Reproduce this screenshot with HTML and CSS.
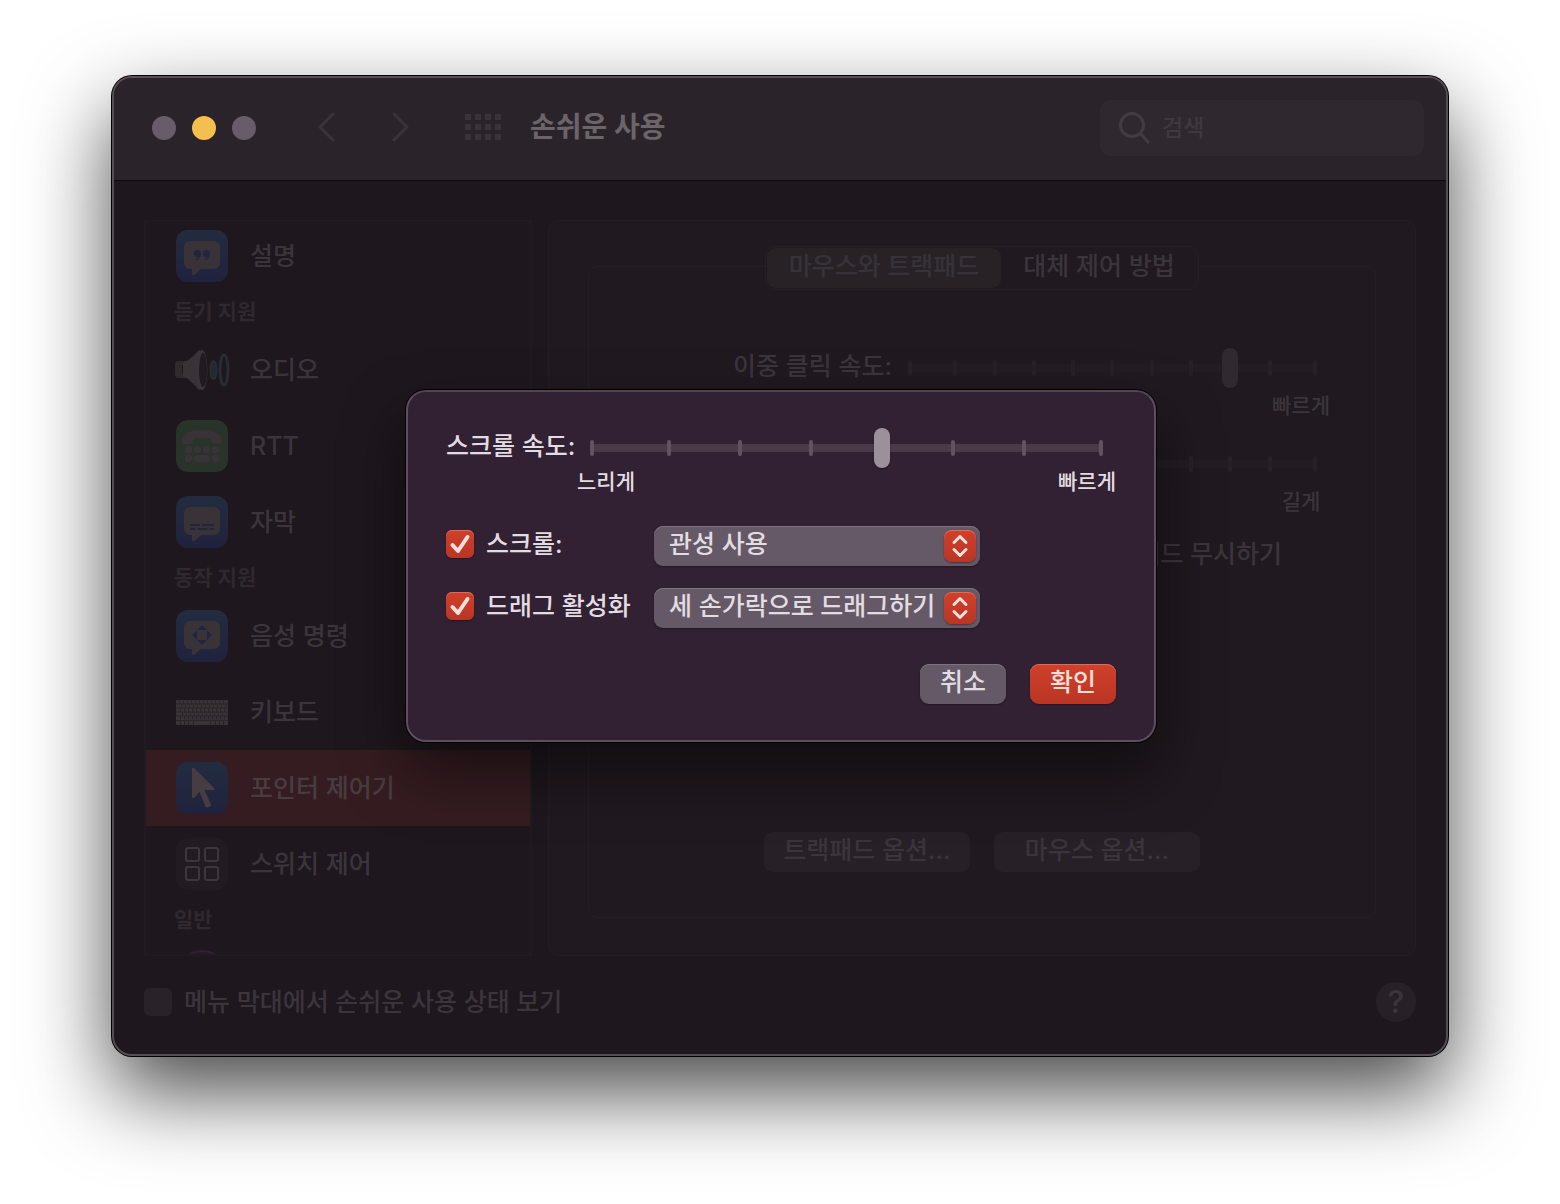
FILE: index.html
```html
<!DOCTYPE html>
<html lang="ko">
<head>
  <meta charset="UTF-8" />
  <title>손쉬운 사용</title>
  <meta name="viewport" content="width=device-width, initial-scale=1.0" />
  <link rel="stylesheet" href="styles.css">
</head>
<body>
  <div class="window">
    <header class="titlebar">
      <div class="lights">
        <span class="light"></span>
        <span class="light minimize"></span>
        <span class="light"></span>
      </div>
      <div class="nav">
        <button type="button" class="nav-btn" aria-label="뒤로">
          <svg width="20" height="30" viewBox="0 0 20 30"><path d="M17 2 L4 15 L17 28" /></svg>
        </button>
        <button type="button" class="nav-btn" aria-label="앞으로">
          <svg width="20" height="30" viewBox="0 0 20 30"><path d="M3 2 L16 15 L3 28" /></svg>
        </button>
      </div>
      <button type="button" class="nav-btn show-all" aria-label="모두 보기">
        <svg width="36" height="26" viewBox="0 0 36 26">
          <path class="dots" d="M0 0h6v6H0zM10 0h6v6h-6zM20 0h6v6h-6zM30 0h6v6h-6zM0 10h6v6H0zM10 10h6v6h-6zM20 10h6v6h-6zM30 10h6v6h-6zM0 20h6v6H0zM10 20h6v6h-6zM20 20h6v6h-6zM30 20h6v6h-6z" />
        </svg>
      </button>
      <h1>손쉬운 사용</h1>
      <label class="search">
        <svg width="32" height="32" viewBox="0 0 32 32"><circle cx="14" cy="13" r="11.500" /><path d="M22.500 21.500 L30 30" /></svg>
        <input type="text" placeholder="검색" aria-label="검색" />
      </label>
    </header>

    <main class="panes">
      <nav class="sidebar">
        <ul>
          <li class="item">
            <svg class="icon" viewBox="0 0 52 52">
              <defs>
                <linearGradient id="blue" x1="0" y1="0" x2="0" y2="1"><stop offset="0" stop-color="#222c40" /><stop offset="1" stop-color="#20223d" /></linearGradient>
              </defs>
              <rect width="52" height="52" rx="12" fill="url(#blue)" />
              <path class="glyph" d="M14 11h24a6 6 0 0 1 6 6v16a6 6 0 0 1-6 6H25l-6 5.500q-3 2-3-1V39h-2a6 6 0 0 1-6-6V17a6 6 0 0 1 6-6z" />
              <path fill="#212640" d="M21.500 20a3.500 3.500 0 0 1 3.500 3.500q0 5-5 6.800v-1.300q2-.8 2.400-2.200a3.500 3.500 0 1 1-.9-6.800zM30.500 20a3.500 3.500 0 0 1 3.500 3.500q0 5-5 6.800v-1.300q2-.8 2.400-2.200a3.500 3.500 0 1 1-.9-6.800z" />
            </svg>
            <a href="#">설명</a>
          </li>
          <li class="section">듣기 지원</li>
          <li class="item">
            <svg class="icon" viewBox="0 0 52 52">
              <path fill="#302a2e" d="M2 17h9v17H2q-3 0-3-4v-9q0-4 3-4z" />
              <path fill="#1e181d" d="M6 21h5v9H6z" />
              <path fill="#393337" d="M7 21q0-4 4-4Q18 12 23 6l4 3v35l-4 2Q18 40 11 34q-4 0-4-3z" />
              <ellipse cx="26" cy="26" rx="5.500" ry="20" fill="#3b3539" />
              <ellipse cx="27" cy="26" rx="4" ry="17" fill="#211b20" />
              <ellipse cx="37.500" cy="26" rx="3" ry="9" fill="#222930" stroke="#262d34" stroke-width="2" />
              <ellipse cx="48" cy="26" rx="4" ry="15" fill="none" stroke="#262d34" stroke-width="3" />
            </svg>
            <a href="#">오디오</a>
          </li>
          <li class="item">
            <svg class="icon" viewBox="0 0 52 52">
              <rect width="52" height="52" rx="12" fill="#283329" />
              <path class="glyph" d="M6 20C7 13 16 10 26 10s19 3 20 10v2q0 2-2 2h-6q-2 0-3-2l-1-4H18l-1 4q-1 2-3 2H8q-2 0-2-2z" />
              <g class="glyph">
                <rect x="9" y="26" width="7" height="7" rx="2" /><rect x="18" y="26" width="7" height="7" rx="2" /><rect x="27" y="26" width="7" height="7" rx="2" /><rect x="36" y="26" width="7" height="7" rx="2" />
                <rect x="9" y="35" width="7" height="7" rx="2" /><rect x="18" y="35" width="16" height="7" rx="2" /><rect x="36" y="35" width="7" height="7" rx="2" />
              </g>
            </svg>
            <a href="#">RTT</a>
          </li>
          <li class="item">
            <svg class="icon" viewBox="0 0 52 52">
              <rect width="52" height="52" rx="12" fill="url(#blue)" />
              <path class="glyph" d="M14 11h24a6 6 0 0 1 6 6v16a6 6 0 0 1-6 6H25l-6 5.500q-3 2-3-1V39h-2a6 6 0 0 1-6-6V17a6 6 0 0 1 6-6z" />
              <path stroke="#212640" stroke-width="2" d="M14 29h10M26 29h12M14 33h5.500M21.500 33h10M33.500 33H38" />
            </svg>
            <a href="#">자막</a>
          </li>
          <li class="section">동작 지원</li>
          <li class="item">
            <svg class="icon" viewBox="0 0 52 52">
              <rect width="52" height="52" rx="12" fill="url(#blue)" />
              <path class="glyph" d="M14 11h24a6 6 0 0 1 6 6v16a6 6 0 0 1-6 6H25l-6 5.500q-3 2-3-1V39h-2a6 6 0 0 1-6-6V17a6 6 0 0 1 6-6z" />
              <path fill="#212640" d="M26 15l5 5H21zM26 35l5-5H21zM16 25l5-5v10zM36 25l-5-5v10z" />
            </svg>
            <a href="#">음성 명령</a>
          </li>
          <li class="item">
            <svg class="icon" viewBox="0 0 52 52">
              <rect y="14" width="52" height="25" rx="1" fill="#393337" />
              <path stroke="#2b252a" d="M0 18h52M0 22h52M0 26h52M0 30h52M0 34.500h52" />
              <path stroke="#2b252a" stroke-dasharray="1 3" stroke-width="3" d="M3 16h48M5 20h46M4 24h46M6 28h44M4 32h46" />
              <path stroke="#2b252a" d="M4.500 35v4M8.500 35v4M12.500 35v4M17.500 35v4M34.500 35v4M39.500 35v4M43.500 35v4M47.500 35v4" />
            </svg>
            <a href="#">키보드</a>
          </li>
          <li class="item selected">
            <svg class="icon" viewBox="0 0 52 52">
              <rect width="52" height="52" rx="12" fill="url(#blue)" />
              <path fill="#473c40" d="M16 7q0-2 2-1l20 20q1 2-1 2h-8.500l6.500 15q0 1-1 1.500l-3 1q-1 0-1.500-1L23.500 30 18 36q-2 1-2-1z" />
            </svg>
            <a href="#">포인터 제어기</a>
          </li>
          <li class="item">
            <svg class="icon" viewBox="0 0 52 52">
              <rect width="52" height="52" rx="12" fill="#221b21" />
              <g fill="none" stroke="#3d373b" stroke-width="2">
                <rect x="10" y="10" width="13" height="13" rx="2" /><rect x="29" y="10" width="13" height="13" rx="2" />
                <rect x="10" y="29" width="13" height="13" rx="2" /><rect x="29" y="29" width="13" height="13" rx="2" />
              </g>
            </svg>
            <a href="#">스위치 제어</a>
          </li>
          <li class="section">일반</li>
          <li class="item">
            <svg class="icon" viewBox="0 0 52 52"><circle cx="26" cy="25" r="26" fill="#2a1727" stroke="#331c35" stroke-width="2" /></svg>
          </li>
        </ul>
      </nav>

      <section class="panel">
        <div class="tabs">
          <button type="button" class="tab active">마우스와 트랙패드</button>
          <button type="button" class="tab">대체 제어 방법</button>
        </div>
        <div class="group">
          <div class="speed-row">
            <label for="doubleClick">이중 클릭 속도:</label>
            <div class="slider-box">
              <div class="slider">
                <div class="ticks"><i></i><i></i><i></i><i></i><i></i><i></i><i></i><i></i><i></i><i></i><i></i></div>
                <input type="range" id="doubleClick" min="0" max="10" value="8" />
              </div>
              <div class="captions"><span></span><span>빠르게</span></div>
            </div>
          </div>
          <div class="speed-row">
            <span></span>
            <div class="slider-box">
              <div class="slider">
                <div class="ticks"><i></i><i></i><i></i><i></i><i></i><i></i><i></i><i></i><i></i><i></i><i></i></div>
                <input type="range" aria-label="지연 시간" min="0" max="10" value="4" />
              </div>
              <div class="captions"><span></span><span>길게</span></div>
            </div>
          </div>
          <label class="check-row ignore">
            <input type="checkbox" />
            내장 트랙패드 무시하기
          </label>
          <div class="options">
            <button type="button" class="btn">트랙패드 옵션...</button>
            <button type="button" class="btn">마우스 옵션...</button>
          </div>
        </div>
      </section>
    </main>

    <footer class="bottom">
      <label class="check-row">
        <input type="checkbox" />
        메뉴 막대에서 손쉬운 사용 상태 보기
      </label>
      <button type="button" class="help" aria-label="도움말">?</button>
    </footer>

    <!-- trackpad options sheet -->
    <form class="sheet">
      <div class="scroll-row">
        <label for="scrollSpeed">스크롤 속도:</label>
        <div class="slider-box">
          <div class="slider">
            <div class="ticks"><i></i><i></i><i></i><i></i><i></i><i></i><i></i><i></i></div>
            <input type="range" id="scrollSpeed" min="0" max="7" value="4" />
          </div>
          <div class="captions"><span>느리게</span><span>빠르게</span></div>
        </div>
      </div>
      <div class="choices">
        <label class="check-row">
          <span class="check">
            <input type="checkbox" checked />
            <svg width="28" height="28" viewBox="0 0 28 28"><path d="M6.500 15 L12 21 L21.500 7" /></svg>
          </span>
          스크롤:
        </label>
        <div class="popup">
          <select aria-label="스크롤"><option>관성 사용</option></select>
          <span class="arrows"><svg width="32" height="32" viewBox="0 0 32 32"><path d="M10 12.500 L16 6.500 L22 12.500 M10 19.500 L16 25.500 L22 19.500" /></svg></span>
        </div>
        <label class="check-row">
          <span class="check">
            <input type="checkbox" checked />
            <svg width="28" height="28" viewBox="0 0 28 28"><path d="M6.500 15 L12 21 L21.500 7" /></svg>
          </span>
          드래그 활성화
        </label>
        <div class="popup">
          <select aria-label="드래그 활성화"><option>세 손가락으로 드래그하기</option></select>
          <span class="arrows"><svg width="32" height="32" viewBox="0 0 32 32"><path d="M10 12.500 L16 6.500 L22 12.500 M10 19.500 L16 25.500 L22 19.500" /></svg></span>
        </div>
      </div>
      <div class="actions">
        <button type="button" class="btn">취소</button>
        <button type="button" class="btn primary">확인</button>
      </div>
    </form>
  </div>
</body>
</html>
```
FILE: styles.css
```css
* {
  box-sizing: border-box;
}

body {
  margin: 0;
  min-height: 100vh;
  padding: 76px 112px 148px;
  background-color: #fff;
  font-family: Inter, "Noto Sans CJK KR", sans-serif;
  font-size: 25px;
  font-weight: 500;
  line-height: 36px;
  color: #3b353b;
}

button, input, select {
  font: inherit;
  color: inherit;
  border: none;
  background: none;
  margin: 0;
  padding: 0;
}

.window {
  position: relative;
  display: flex;
  flex-direction: column;
  height: calc(100vh - 224px);
  border: 2px solid #554e55;
  border-radius: 20px;
  background-color: #1e171d;
  box-shadow: 0 0 0 1px #000, 0 36px 84px rgba(0, 0, 0, 0.72);
}

/* title bar */
.titlebar {
  display: flex;
  align-items: center;
  height: 103px;
  padding: 0 22px 2px 38px;
  border-bottom: 1px solid #0e0a0e;
  border-radius: 18px 18px 0 0;
  background-color: #2b232a;
}

.lights {
  display: flex;
  gap: 16px;
}

.light {
  width: 24px;
  height: 24px;
  border-radius: 50%;
  background-color: #695c6a;
}

.minimize {
  background-color: #f5bf4f;
}

.nav {
  display: flex;
  gap: 55px;
  margin-left: 60px;
}

.nav-btn {
  padding-bottom: 2px;
}

.nav-btn svg {
  display: block;
  fill: none;
  stroke: #3a333a;
  stroke-width: 3;
  stroke-linecap: round;
  stroke-linejoin: round;
}

.show-all {
  margin-left: 54px;
}

.nav-btn .dots {
  fill: #393239;
  stroke: none;
}

h1 {
  margin: 0 auto 0 29px;
  padding-bottom: 2px;
  font-size: 28px;
  font-weight: bold;
  color: #6b656a;
}

.search {
  display: flex;
  align-items: center;
  gap: 12px;
  width: 324px;
  height: 56px;
  padding-left: 18px;
  border-radius: 10px;
  background-color: #30282f;
}

.search svg {
  flex: none;
  fill: none;
  stroke: #423b41;
  stroke-width: 3;
  stroke-linecap: round;
}

.search input {
  width: 100%;
  font-size: 23px;
}

.search input::placeholder {
  color: #3f383e;
  opacity: 1;
}

/* panes */
.panes {
  display: flex;
  flex: 1;
  min-height: 0;
  gap: 16px;
  padding: 39px 30px 0;
}

.sidebar {
  width: 388px;
  overflow: hidden;
  border: 2px solid #211b21;
}

.sidebar ul {
  margin: -4px 0 0;
  padding: 0;
  list-style: none;
}

.item {
  display: flex;
  align-items: center;
  gap: 22px;
  height: 76px;
  padding-left: 30px;
}

.item a {
  padding-bottom: 1px;
  color: inherit;
  text-decoration: none;
}

.icon {
  width: 52px;
  height: 52px;
  overflow: visible;
}

.glyph {
  fill: #393237;
}

.selected {
  background-color: #351c20;
  color: #483c40;
}

.section {
  height: 38px;
  padding-left: 28px;
  font-size: 21px;
  font-weight: bold;
  color: #2f282f;
}

.panel {
  display: flex;
  flex-direction: column;
  align-items: center;
  flex: 1;
  padding: 25px 39px 37px;
  border: 1px solid #241d23;
  border-radius: 10px;
  background-color: #20191f;
}

.tabs {
  position: relative;
  display: flex;
  width: 434px;
  height: 44px;
  padding: 1px;
  border: 1px solid #252026;
  border-radius: 11px;
  background-color: #20191f;
}

.tab {
  flex: 1;
  border-radius: 9px;
  line-height: 32px;
  padding-bottom: 4px;
}

.active {
  flex: none;
  width: 234px;
  background-color: #282227;
  color: #373237;
}

.group {
  display: flex;
  flex-direction: column;
  width: 100%;
  flex: 1;
  margin-top: -24px;
  padding: 81px 58px 45px 0;
  border: 1px solid #251f25;
  border-radius: 10px;
}

.speed-row {
  display: grid;
  grid-template-columns: 303px 1fr;
  column-gap: 16px;
  height: 96px;
}

.speed-row label {
  text-align: right;
}

.slider {
  position: relative;
  height: 40px;
}

.ticks {
  display: flex;
  align-items: center;
  justify-content: space-between;
  height: 40px;
  padding: 0 6px;
  background: linear-gradient(#231d23, #231d23) center / 100% 8px no-repeat;
}

.ticks i {
  width: 4px;
  height: 16px;
  border-radius: 2px;
  background-color: #272127;
}

.ticks i:first-child {
  margin: 0 6px 0 -6px;
}

.ticks i:last-child {
  margin: 0 -6px 0 6px;
}

input[type="range"] {
  position: absolute;
  inset: 0;
  width: 100%;
  height: 40px;
  appearance: none;
}

input[type="range"]::-webkit-slider-thumb {
  appearance: none;
  width: 16px;
  height: 40px;
  border-radius: 8px;
  background-color: #302a30;
}

.captions {
  display: flex;
  justify-content: space-between;
  margin: 0 -13px;
  font-size: 21px;
}

.captions span {
  width: 58px;
  text-align: center;
}

.check-row {
  display: flex;
  align-items: center;
  gap: 12px;
}

.ignore {
  justify-content: flex-end;
  margin: -4px 35px 0 0;
}

input[type="checkbox"] {
  appearance: none;
  display: block;
  width: 28px;
  height: 28px;
  border-radius: 6px;
  background-color: #292228;
}

.options {
  display: flex;
  gap: 24px;
  margin-top: auto;
  margin-left: 175px;
}

.btn {
  height: 40px;
  padding-bottom: 4px;
  border-radius: 9px;
  background-color: #272026;
  line-height: 32px;
}

.options .btn {
  width: 206px;
}

.bottom {
  display: flex;
  align-items: center;
  justify-content: space-between;
  height: 98px;
  padding: 0 30px 6px;
}

.help {
  width: 40px;
  height: 40px;
  border-radius: 50%;
  background-color: #272127;
  font-size: 31px;
}

/* sheet */
.sheet {
  position: absolute;
  top: 312px;
  left: calc(50% - 374px);
  width: 750px;
  padding: 36px 38px;
  border: 2px solid #5e4f60;
  border-top-color: #4f474f;
  border-radius: 20px;
  background-color: #322033;
  box-shadow: 0 0 0 1px #000, 0 30px 60px rgba(0, 0, 0, 0.5);
  color: #e2dde2;
}

.scroll-row {
  display: grid;
  grid-template-columns: 144px 1fr;
  padding-right: 13px;
}

.sheet .ticks {
  background-image: linear-gradient(#493949, #493949);
}

.sheet .ticks i {
  background-color: #615262;
}

.sheet .captions {
  line-height: 28px;
}

.sheet input[type="range"]::-webkit-slider-thumb {
  background-color: #9b909b;
  box-shadow: 0 1px 2px rgba(0, 0, 0, 0.3);
}

.choices {
  display: grid;
  grid-template-columns: 208px 326px;
  row-gap: 22px;
  margin-top: 30px;
}

.choices .check-row {
  height: 36px;
}

.check {
  position: relative;
}

.check input[type="checkbox"] {
  background: linear-gradient(#d1402a, #b83624);
  box-shadow: inset 0 1px 0 #df6a57, 0 1px 2px rgba(0, 0, 0, 0.3);
}

.check svg {
  position: absolute;
  inset: 0;
  fill: none;
  stroke: #f6dfdc;
  stroke-width: 4;
  stroke-linecap: round;
  stroke-linejoin: round;
}

.popup {
  position: relative;
  height: 40px;
}

.popup select {
  appearance: none;
  width: 100%;
  height: 40px;
  padding: 0 40px 4px 15px;
  border-radius: 9px;
  background-color: #665967;
  box-shadow: inset 0 1px 0 #7e727f, 0 1px 2px rgba(0, 0, 0, 0.3);
}

.arrows {
  position: absolute;
  top: 4px;
  right: 4px;
  width: 32px;
  height: 32px;
  border-radius: 8px;
  background: linear-gradient(#d1402a, #b83624);
  box-shadow: inset 0 1px 0 #df6a57, 0 1px 2px rgba(0, 0, 0, 0.4);
  pointer-events: none;
}

.arrows svg {
  display: block;
  fill: none;
  stroke: #f6dfdc;
  stroke-width: 3;
  stroke-linecap: round;
  stroke-linejoin: round;
}

.actions {
  display: flex;
  justify-content: flex-end;
  gap: 24px;
  margin-top: 36px;
}

.actions .btn {
  width: 86px;
  background-color: #665967;
  box-shadow: inset 0 1px 0 #7e727f, 0 1px 2px rgba(0, 0, 0, 0.3);
}

.actions .primary {
  background: linear-gradient(#d1402a, #b83624);
  box-shadow: inset 0 1px 0 #df6a57, 0 1px 2px rgba(0, 0, 0, 0.3);
  color: #f9e0dc;
}
```
